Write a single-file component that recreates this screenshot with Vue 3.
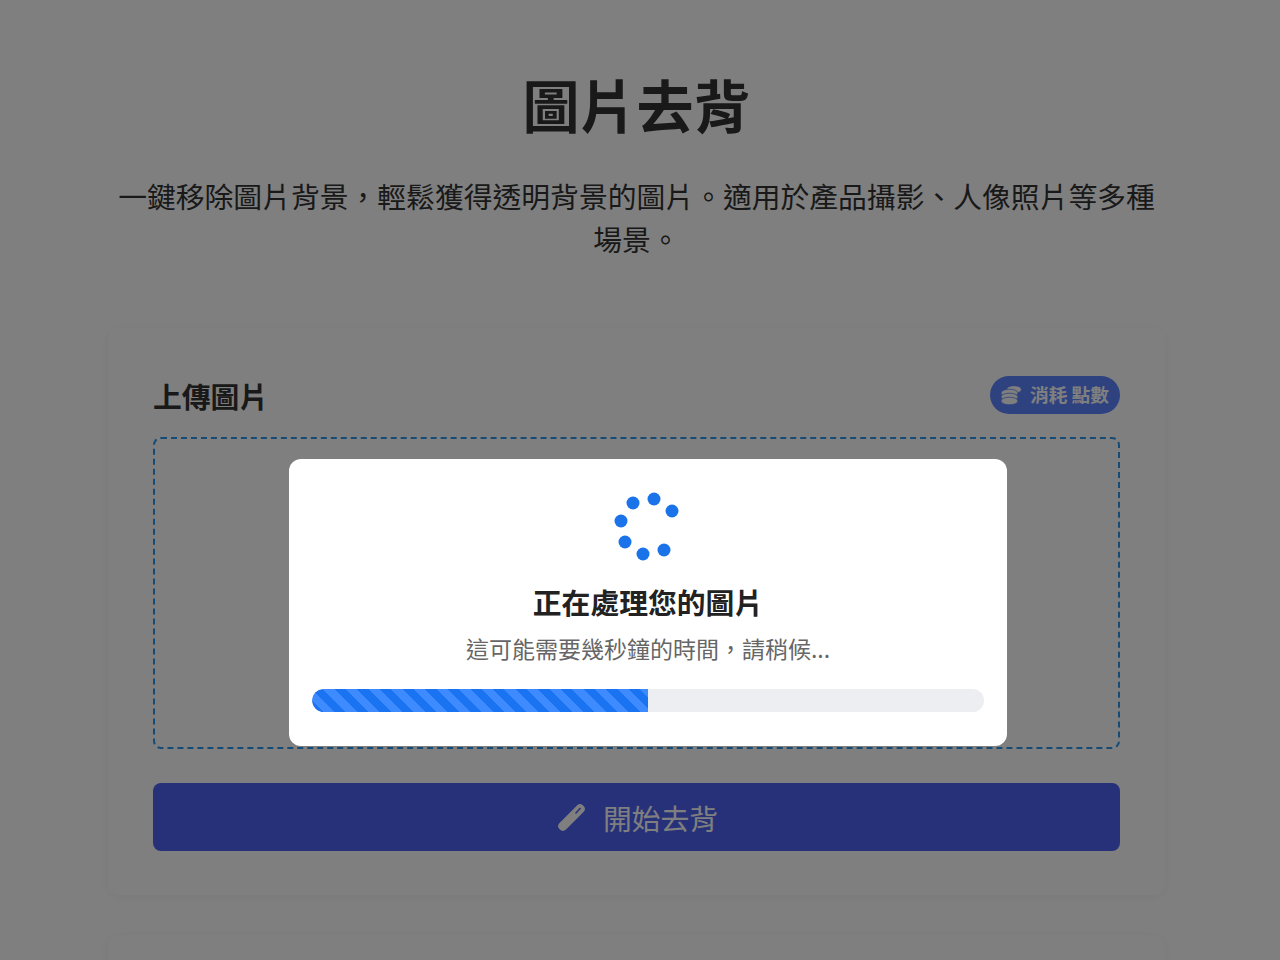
<script setup>
const dots = [
  [633, 503], [654, 499], [672, 511], [621, 521],
  [625, 542], [643, 554], [664, 550],
]
</script>

<template>
  <div class="page">
    <header class="head">
      <h1>圖片去背</h1>
      <p>一鍵移除圖片背景，輕鬆獲得透明背景的圖片。適用於產品攝影、人像照片等多種場景。</p>
    </header>

    <section class="card">
      <div class="card-top">
        <h2>上傳圖片</h2>
        <span class="badge">
          <svg width="22" height="20" viewBox="0 0 22 20" fill="currentColor" stroke="#5c84ff" stroke-width="0.800">
            <ellipse cx="14" cy="4.500" rx="7.500" ry="3.800" />
            <ellipse cx="9.500" cy="8" rx="8.500" ry="3.800" />
            <ellipse cx="9.500" cy="12" rx="8.500" ry="3.800" />
            <ellipse cx="9.500" cy="16" rx="8.500" ry="3.800" />
          </svg>
          <span>消耗 點數</span>
        </span>
      </div>
      <div class="dropzone"></div>
      <button class="start">
        <svg width="32" height="32" viewBox="0 0 32 32">
          <path d="M4.500 22 22 4.500a4.600 4.600 0 0 1 6.500 6.500L11 28.500a4.600 4.600 0 0 1-6.500-6.500z" fill="#fff" />
          <path d="M20.500 12.500 25.500 7" stroke="#4c62f4" stroke-width="1.500" />
        </svg>
        開始去背
      </button>
    </section>

    <section class="card next"></section>

    <div class="overlay">
      <div class="modal">
        <svg class="spinner" width="80" height="80" viewBox="608 486 80 80">
          <circle v-for="d in dots" :key="d[0]" :cx="d[0]" :cy="d[1]" r="6.500" fill="#1a73e8" />
        </svg>
        <h3>正在處理您的圖片</h3>
        <p>這可能需要幾秒鐘的時間，請稍候...</p>
        <div class="track">
          <div class="fill" :style="{ width: '50%' }"></div>
        </div>
      </div>
    </div>
  </div>
</template>

<style>
html, body {
  margin: 0;
  background: #fff;
}
</style>

<style scoped>
.page {
  height: 960px;
  overflow: hidden;
  box-sizing: border-box;
  padding: 65px 115px 0 108px;
  font-family: "Noto Sans CJK TC", "Noto Sans", sans-serif;
  color: #333;
  background: #fff;
}

.head {
  text-align: center;
  margin-bottom: 68px;
}

.head h1 {
  margin: 0 0 33px;
  font-size: 57px;
  line-height: 76px;
  font-weight: 700;
}

.head p {
  margin: 0;
  font-size: 28.8px;
  line-height: 43px;
}

.card {
  box-sizing: border-box;
  height: 567px;
  padding: 45px;
  background: #fff;
  border-radius: 12px;
  box-shadow: 0 2px 12px rgba(0, 0, 0, 0.05);
}

.next {
  margin-top: 40px;
}

.card-top {
  display: flex;
  align-items: center;
  justify-content: space-between;
  height: 38px;
  margin: 3px 0 23px;
}

.card-top h2 {
  margin: 0;
  font-size: 28.8px;
  font-weight: 700;
}

.badge {
  display: flex;
  align-items: center;
  gap: 8px;
  height: 38px;
  padding: 0 11px 0 10px;
  border-radius: 19px;
  background: #5c84ff;
  color: #fff;
  font-size: 18.700px;
  font-weight: 700;
}

.badge span {
  margin-top: -3px;
}

.dropzone {
  box-sizing: border-box;
  height: 312px;
  border: 2px dashed #2d96ea;
  border-radius: 8px;
  background: #fff;
}

.start {
  display: flex;
  align-items: center;
  justify-content: center;
  gap: 16px;
  width: 100%;
  height: 68px;
  margin-top: 34px;
  border: 0;
  border-radius: 8px;
  background: #4c62f4;
  color: #fff;
  font: inherit;
  font-size: 28.8px;
}

.overlay {
  position: fixed;
  inset: 0;
  display: flex;
  align-items: flex-start;
  padding: 459px 0 0 289px;
  background: rgba(0, 0, 0, 0.5);
}

.modal {
  box-sizing: border-box;
  width: 718px;
  height: 287px;
  padding: 27px 23px 0;
  background: #fff;
  border-radius: 12px;
  text-align: center;
}

.spinner {
  display: block;
  margin: 0 auto 16px;
}

.modal h3 {
  margin: 0;
  font-size: 28.8px;
  line-height: 40px;
  font-weight: 700;
  color: #222;
}

.modal p {
  margin: 9px 0 0;
  font-size: 23px;
  line-height: 34px;
  color: #666;
}

.track {
  height: 23px;
  margin-top: 24px;
  border-radius: 12px;
  background: #eceef1;
  overflow: hidden;
}

.fill {
  height: 100%;
  border-radius: 12px 0 0 12px;
  background: repeating-linear-gradient(
    45deg,
    #1a73f0 0 8px,
    #3d8bff 8px 16px
  );
}
</style>
